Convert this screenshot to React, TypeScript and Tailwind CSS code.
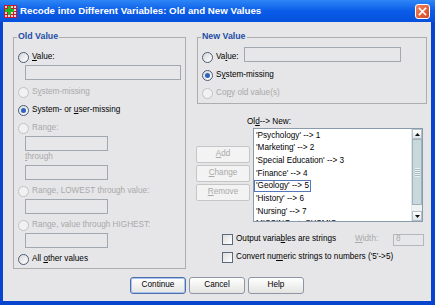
import React from 'react';

const items = [
  "'Psychology' --> 1",
  "'Marketing' --> 2",
  "'Special Education' --> 3",
  "'Finance' --> 4",
  "'Geology' --> 5",
  "'History' --> 6",
  "'Nursing' --> 7",
  'MISSING --> SYSMIS',
];

function Radio({ checked, disabled, children }: { checked?: boolean; disabled?: boolean; children: React.ReactNode }) {
  return (
    <div className="flex items-center h-[14px] gap-[3px]">
      <span
        className={`w-[11px] h-[11px] rounded-full border flex items-center justify-center ${
          disabled ? 'border-[#c2c2c2] bg-[#f1f1f1]' : 'border-[#4a5d78] bg-gradient-to-br from-[#d9d9d9] to-white'
        }`}
      >
        {checked && <span className="w-[5px] h-[5px] rounded-full bg-[#2f63bd]" />}
      </span>
      <span className={disabled ? 'text-[#a9a9a9]' : 'text-black'}>{children}</span>
    </div>
  );
}

function Field({ className = '' }: { className?: string }) {
  return <div className={`h-[15px] border border-[#a2a8b0] bg-[#e7e7e9] ${className}`} />;
}

function Check({ children }: { children: React.ReactNode }) {
  return (
    <div className="flex items-center gap-[3px]">
      <span className="w-[11px] h-[11px] border border-[#5b6a7c] bg-gradient-to-br from-[#dedede] to-white" />
      <span>{children}</span>
    </div>
  );
}

function SideButton({ children }: { children: React.ReactNode }) {
  return (
    <div className="h-[17px] w-[54px] rounded-[2px] border border-[#c6c6c6] bg-[#f3f3f3] flex items-center justify-center text-[#a9a9a9]">
      {children}
    </div>
  );
}

function Button({ children, focused }: { children: React.ReactNode; focused?: boolean }) {
  return (
    <div
      className={`h-[17px] w-[56px] rounded-[3px] border flex items-center justify-center bg-gradient-to-b from-white to-[#e4e4e2] ${
        focused ? 'border-[#4d6ea8] shadow-[inset_0_0_0_1px_#a9c4ee]' : 'border-[#8d97a3]'
      }`}
    >
      {children}
    </div>
  );
}

function AppIcon() {
  return (
    <svg width="13" height="13" viewBox="0 0 13 13">
      <rect x="0" y="0" width="13" height="13" fill="#c41a2b" />
      {[2, 5, 8, 11].map((y) =>
        [2, 5, 8, 11].map((x) => <rect key={`${x}-${y}`} x={x - 1} y={y - 1} width="2" height="2" fill="#f6d0d4" />)
      )}
      <rect x="4" y="1" width="3" height="9" fill="#1fb81f" />
      <rect x="1" y="4" width="9" height="3" fill="#1fb81f" />
    </svg>
  );
}

export default function App() {
  return (
    <div className="w-[435px] h-[305px] flex flex-col bg-[#0845cf] font-['Liberation_Sans',Arial,sans-serif] text-[8.2px] leading-none text-black">
      {/* title bar */}
      <div className="h-[22px] flex items-center pl-[4px] pr-[5px] bg-gradient-to-b from-[#2e86f6] via-[#0a5ce8] to-[#0650dc]">
        <AppIcon />
        <span className="ml-[3px] text-white font-bold text-[9.7px]">
          Recode into Different Variables: Old and New Values
        </span>
        <div className="ml-auto w-[15px] h-[15px] rounded-[3px] border border-white bg-gradient-to-br from-[#f0835f] to-[#d4451f] flex items-center justify-center">
          <svg width="9" height="9" viewBox="0 0 9 9">
            <path d="M1.5 1.5 L7.5 7.5 M7.5 1.5 L1.5 7.5" stroke="white" strokeWidth="1.6" strokeLinecap="square" />
          </svg>
        </div>
      </div>

      {/* client area */}
      <div className="flex-1 ml-[3px] mr-[4px] mb-[4px] bg-[#e6e6e8] flex flex-col">
        <div className="flex pt-[15px]">
          {/* Old Value */}
          <div className="relative ml-[10px] w-[173px] h-[232px] border border-[#adadad] pl-[4px] pt-[12px] flex flex-col">
            <span className="absolute -top-[6px] left-[3px] px-[1px] bg-[#e6e6e8] font-bold text-[8.8px] text-[#1d4fa6]">Old Value</span>
            <Radio>
              <u>V</u>alue:
            </Radio>
            <Field className="mt-[1px] ml-[7px] w-[156px]" />
            <div className="mt-[5px]">
              <Radio disabled>
                S<u>y</u>stem-missing
              </Radio>
            </div>
            <div className="mt-[4px]">
              <Radio checked>
                System- or <u>u</u>ser-missing
              </Radio>
            </div>
            <div className="mt-[4px]">
              <Radio disabled>
                Ran<u>g</u>e:
              </Radio>
            </div>
            <Field className="mt-[1px] ml-[7px] w-[83px]" />
            <div className="h-[13px] ml-[7px] flex items-center text-[#a9a9a9]">
              <u>t</u>hrough
            </div>
            <Field className="mt-[1px] ml-[7px] w-[83px]" />
            <div className="mt-[4px]">
              <Radio disabled>Range, LOWEST through value:</Radio>
            </div>
            <Field className="mt-[1px] ml-[7px] w-[83px]" />
            <div className="mt-[4px]">
              <Radio disabled>
                Ran<u>g</u>e, value through HIGHEST:
              </Radio>
            </div>
            <Field className="mt-[1px] ml-[7px] w-[83px]" />
            <div className="mt-[4px]">
              <Radio>
                All <u>o</u>ther values
              </Radio>
            </div>
          </div>

          {/* right column */}
          <div className="ml-[10px] w-[231px] flex flex-col">
            <div className="relative ml-[1px] w-[230px] h-[67px] border border-[#adadad] pl-[4px] pt-[9px] flex flex-col">
              <span className="absolute -top-[6px] left-[3px] px-[1px] bg-[#e6e6e8] font-bold text-[8.8px] text-[#1d4fa6]">New Value</span>
              <div className="flex items-start">
                <div className="mt-[3px] w-[42px]">
                  <Radio>
                    Va<u>l</u>ue:
                  </Radio>
                </div>
                <Field className="w-[157px]" />
              </div>
              <div className="mt-[4px]">
                <Radio checked>
                  S<u>y</u>stem-missing
                </Radio>
              </div>
              <div className="mt-[4px]">
                <Radio disabled>
                  Co<u>p</u>y old value(s)
                </Radio>
              </div>
            </div>

            <div className="mt-[12px] h-[12px] ml-[51px] flex items-center">
              Ol<u>d</u> --&gt; New:
            </div>

            <div className="flex">
              <div className="w-[54px] pt-[18px] flex flex-col gap-[2px]">
                <SideButton>
                  <u>A</u>dd
                </SideButton>
                <SideButton>
                  <u>C</u>hange
                </SideButton>
                <SideButton>
                  <u>R</u>emove
                </SideButton>
              </div>
              <div className="ml-[3px] w-[170px] h-[94px] border border-[#8a9bab] bg-white flex">
                <div className="flex-1 overflow-hidden">
                  {items.map((it, i) => (
                    <div key={i} className="h-[12.7px] flex items-stretch">
                      <span
                        className={`pt-[1.5px] px-[1px] whitespace-nowrap border ${
                          i === 4 ? 'border-[#5577b8]' : 'border-transparent'
                        }`}
                      >
                        {it}
                      </span>
                    </div>
                  ))}
                </div>
                <div className="w-[11px] flex flex-col border-l border-[#dfe5e8]">
                  <div className="h-[10px] border border-[#b4c0c6] bg-gradient-to-b from-white to-[#dde5e8] flex items-center justify-center">
                    <svg width="5" height="3" viewBox="0 0 5 3">
                      <path d="M0 3 L2.5 0 L5 3 Z" fill="#111" />
                    </svg>
                  </div>
                  <div className="h-[66px] border border-[#9fb3ba] bg-[#c9d8dc] flex items-center justify-center">
                    <div className="w-[5px] h-[9px] bg-[repeating-linear-gradient(0deg,#e9f0f1_0px,#e9f0f1_1px,#a9bcc2_1px,#a9bcc2_2px)]" />
                  </div>
                  <div className="h-[6px] bg-[#eef2f3]" />
                  <div className="h-[10px] border border-[#b4c0c6] bg-gradient-to-b from-white to-[#dde5e8] flex items-center justify-center">
                    <svg width="5" height="3" viewBox="0 0 5 3">
                      <path d="M0 0 L2.5 3 L5 0 Z" fill="#111" />
                    </svg>
                  </div>
                </div>
              </div>
            </div>

            <div className="mt-[11px] ml-[26px] h-[13px] flex items-center">
              <Check>
                Output varia<u>b</u>les are strings
              </Check>
              <span className="ml-auto w-[38px] text-[#a9a9a9]">
                <u>W</u>idth:
              </span>
              <div className="w-[31px] h-[12px] mr-[3px] border border-[#b3b8be] bg-[#e7e7e9] flex items-center pl-[2px] text-[#a9a9a9]">
                8
              </div>
            </div>
            <div className="mt-[5px] ml-[26px] h-[13px] flex items-center">
              <Check>
                Convert nu<u>m</u>eric strings to numbers ('5'-&gt;5)
              </Check>
            </div>
          </div>
        </div>

        <div className="mt-[8px] flex justify-center gap-[3px]">
          <Button focused>Continue</Button>
          <Button>Cancel</Button>
          <Button>Help</Button>
        </div>
      </div>
    </div>
  );
}
